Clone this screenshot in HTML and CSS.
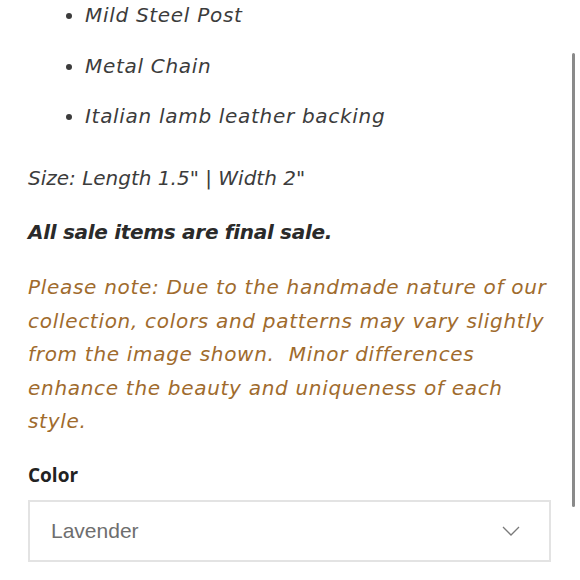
FILE: index.html
```html
<!DOCTYPE html>
<html>
<head>
<meta charset="utf-8">
<link rel="stylesheet" href="styles.css">
</head>
<body>
<div class="page">
  <ul class="features">
    <li>Mild Steel Post</li>
    <li>Metal Chain</li>
    <li>Italian lamb leather backing</li>
  </ul>
  <p class="size">Size: Length 1.5" | Width 2"</p>
  <p class="final">All sale items are final sale.</p>
  <p class="note">Please note: Due to the handmade nature of our collection, colors and patterns may vary slightly from the image shown.&nbsp; Minor differences enhance the beauty and uniqueness of each style.</p>
  <div class="field">
    <div class="label">Color</div>
    <div class="select">
      <span class="value">Lavender</span>
      <svg class="chev" width="18" height="10" viewBox="0 0 18 10"><path d="M1 1 L9 9 L17 1" fill="none" stroke="#7a7a7a" stroke-width="1.3"/></svg>
    </div>
  </div>
</div>
<div class="scrollbar"></div>
</body>
</html>
```
FILE: styles.css
```css
html, body {
  margin: 0;
  padding: 0;
  background: #fff;
}
.page {
  width: 523px;
  padding-left: 28px;
  margin-top: -1px;
  font-family: "DejaVu Sans", sans-serif;
  font-style: italic;
  font-size: 20px;
  letter-spacing: 0.7px;
  line-height: 33.6px;
  color: #3c3c3c;
}
.features {
  margin: 0 0 28px 0;
  padding-left: 57px;
  list-style: disc;
}
.features li {
  margin-bottom: 17px;
}
.features li:last-child {
  margin-bottom: 0;
}
p {
  margin: 0 0 20.5px 0;
}
.size {
  letter-spacing: 0;
}
.final {
  font-weight: 700;
  letter-spacing: -0.3px;
  color: #2a2a2a;
  margin-bottom: 21.5px;
}
.note {
  color: #a06b2d;
  margin-bottom: 24px;
}
.label {
  font-family: "Open Sans", sans-serif;
  font-style: normal;
  font-weight: 700;
  font-size: 19px;
  letter-spacing: 0;
  line-height: 24px;
  color: #222;
  margin-bottom: 13px;
}
.select {
  box-sizing: border-box;
  height: 62px;
  border: 2px solid #e3e3e3;
  display: flex;
  align-items: center;
  justify-content: space-between;
  padding: 0 29px 0 21px;
}
.value {
  font-family: "Liberation Sans", Arial, sans-serif;
  font-style: normal;
  font-size: 21px;
  letter-spacing: 0;
  color: #6e6e6e;
}
.chev {
  display: block;
}
.scrollbar {
  position: fixed;
  left: 572px;
  top: 53px;
  width: 3px;
  height: 454px;
  border-radius: 2px;
  background: #8a8a8a;
}
```
